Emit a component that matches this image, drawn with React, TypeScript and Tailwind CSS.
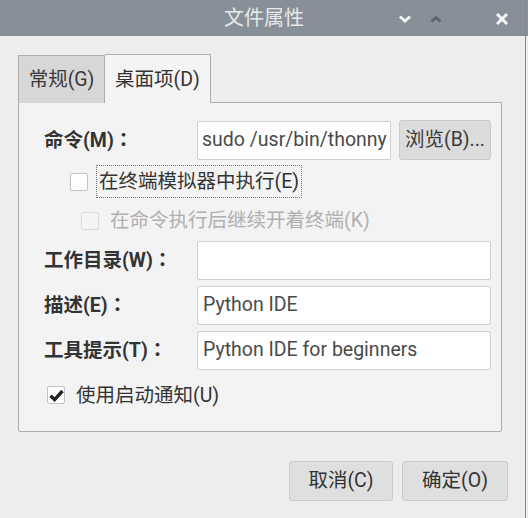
import React from 'react';

const font = { fontFamily: '"Roboto", "Noto Sans CJK SC", sans-serif' };

function Colon() {
    return <span style={{ fontFamily: '"Noto Sans CJK TC", sans-serif' }}>：</span>;
}

function Check({ checked = false, disabled = false }: { checked?: boolean; disabled?: boolean }) {
    return (
        <span
            className={`flex h-[18px] w-[18px] shrink-0 items-center justify-center rounded-[2px] border ${
                disabled ? 'border-[#dadada] bg-[#f4f4f4]' : 'border-[#c2c2c2] bg-white'
            }`}
        >
            {checked && (
                <svg width="15" height="13" viewBox="0 0 15 13">
                    <path d="M1.5 6.8 L5.6 10.6 L13.5 2" fill="none" stroke="#262626" strokeWidth="3.4" />
                </svg>
            )}
        </span>
    );
}

function Field({ label, value = '' }: { label: string; value?: string }) {
    return (
        <div className="flex items-center">
            <span className="w-[153px] shrink-0 font-bold text-[#333]">
                {label}
                <Colon />
            </span>
            <div className="flex h-[39px] flex-1 items-center rounded-[2px] border border-[#cfcfcf] bg-white px-[5px] text-[#4a4a4a]">
                {value}
            </div>
        </div>
    );
}

export default function App() {
    return (
        <div className="relative h-[518px] w-[528px] overflow-hidden bg-[#ededed] text-[19.5px] leading-none" style={font}>
            {/* title bar */}
            <div className="relative flex h-[36px] items-center justify-center bg-[#878f98] text-[20px] text-[#e8e8e8]">
                文件属性
                <svg width="14" height="10" viewBox="0 0 14 10" className="absolute left-[398px] top-[14px]">
                    <path d="M2 2.5 L7 7 L12 2.5" fill="none" stroke="#f4f4f4" strokeWidth="3" />
                </svg>
                <svg width="14" height="10" viewBox="0 0 14 10" className="absolute left-[429px] top-[14px]">
                    <path d="M2.5 7.5 L7 3.5 L11.5 7.5" fill="none" stroke="#5d636b" strokeWidth="3" />
                </svg>
                <svg width="16" height="16" viewBox="0 0 16 16" className="absolute left-[494px] top-[11px]">
                    <path d="M3 3 L13 13 M13 3 L3 13" fill="none" stroke="#f7f7f7" strokeWidth="3" />
                </svg>
            </div>
            <div className="absolute right-[2px] top-0 h-full w-px bg-[#a97f5c]" />

            <div className="px-[18px] pt-[18px]">
                {/* tabs */}
                <div className="relative z-10 -mb-px flex items-end">
                    <div className="flex h-[48px] w-[86px] items-center justify-center border border-r-0 border-b-0 border-[#adadad] bg-[#d7d7d7] text-[#3a3a3a]">
                        常规(G)
                    </div>
                    <div className="flex h-[49px] w-[107px] items-center justify-center rounded-t-[2px] border border-b-0 border-[#adadad] bg-[#f4f4f4] pt-[2px] text-[#333]">
                        桌面项(D)
                    </div>
                </div>

                {/* panel */}
                <div className="flex h-[330px] w-[484px] flex-col rounded-b-[2px] border border-[#adadad] bg-[#f3f3f3] pl-[25px] pr-[10px] pt-[17px]">
                    <div className="flex items-center">
                        <span className="w-[153px] shrink-0 font-bold text-[#333]">
                            命令(M)
                            <Colon />
                        </span>
                        <div className="flex h-[39px] w-[194px] items-center overflow-hidden whitespace-nowrap rounded-[2px] border border-[#cfcfcf] bg-white px-[4px] text-[#4a4a4a]">
                            sudo /usr/bin/thonny
                        </div>
                        <button className="ml-[8px] flex h-[40px] flex-1 items-center justify-center whitespace-nowrap rounded-[3px] border border-[#cacaca] bg-[#dcdcdc] text-[#3a3a3a]">
                            浏览(B)...
                        </button>
                    </div>

                    <div className="mt-[5px] flex items-center pl-[26px]">
                        <Check />
                        <span className="ml-[8px] flex h-[33px] items-center border border-dotted border-[#777] px-[2px] text-[#333]">
                            在终端模拟器中执行(E)
                        </span>
                    </div>

                    <div className="mt-[13px] flex items-center pl-[37px]">
                        <Check disabled />
                        <span className="ml-[11px] text-[#b0b0b0]">在命令执行后继续开着终端(K)</span>
                    </div>

                    <div className="mt-[10px] flex flex-col gap-[6px]">
                        <Field label="工作目录(W)" />
                        <Field label="描述(E)" value="Python IDE" />
                        <Field label="工具提示(T)" value="Python IDE for beginners" />
                    </div>

                    <div className="mt-[16px] flex items-center pl-[3px]">
                        <Check checked />
                        <span className="ml-[11px] text-[#333]">使用启动通知(U)</span>
                    </div>
                </div>
            </div>

            {/* buttons */}
            <div className="mt-[29px] flex justify-end gap-[9px] pr-[20px]">
                <button className="flex h-[40px] w-[104px] items-center justify-center rounded-[3px] border border-[#cacaca] bg-[#dfdfdf] text-[#333]">
                    取消(C)
                </button>
                <button className="flex h-[40px] w-[106px] items-center justify-center rounded-[3px] border border-[#cacaca] bg-[#dfdfdf] text-[#333]">
                    确定(O)
                </button>
            </div>
        </div>
    );
}
